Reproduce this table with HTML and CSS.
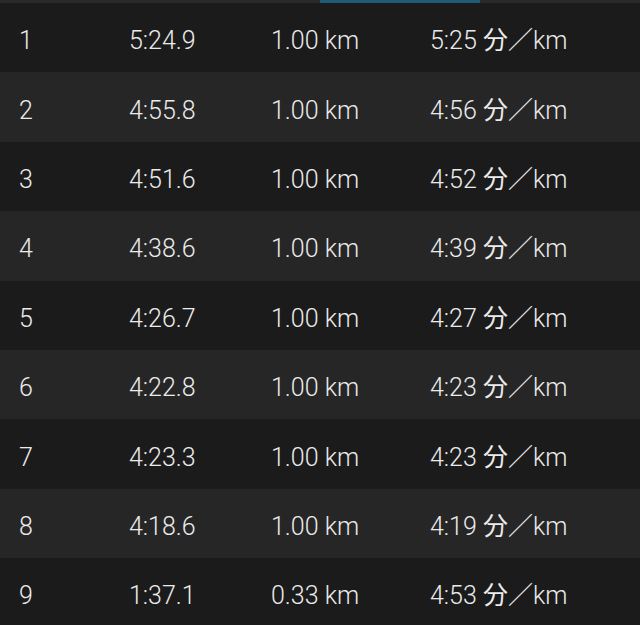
FILE: index.html
```html
<!DOCTYPE html>
<html lang="ja">
<head>
<meta charset="utf-8">
<link rel="stylesheet" href="styles.css">
</head>
<body>
<div class="tabbar"><div class="tab-indicator"></div></div>
<div class="laps">
  <div class="lap"><span>1</span><span>5:24.9</span><span>1.00 km</span><span>5:25 <span class="cjk">分／</span>km</span></div>
  <div class="lap"><span>2</span><span>4:55.8</span><span>1.00 km</span><span>4:56 <span class="cjk">分／</span>km</span></div>
  <div class="lap"><span>3</span><span>4:51.6</span><span>1.00 km</span><span>4:52 <span class="cjk">分／</span>km</span></div>
  <div class="lap"><span>4</span><span>4:38.6</span><span>1.00 km</span><span>4:39 <span class="cjk">分／</span>km</span></div>
  <div class="lap"><span>5</span><span>4:26.7</span><span>1.00 km</span><span>4:27 <span class="cjk">分／</span>km</span></div>
  <div class="lap"><span>6</span><span>4:22.8</span><span>1.00 km</span><span>4:23 <span class="cjk">分／</span>km</span></div>
  <div class="lap"><span>7</span><span>4:23.3</span><span>1.00 km</span><span>4:23 <span class="cjk">分／</span>km</span></div>
  <div class="lap"><span>8</span><span>4:18.6</span><span>1.00 km</span><span>4:19 <span class="cjk">分／</span>km</span></div>
  <div class="lap"><span>9</span><span>1:37.1</span><span>0.33 km</span><span>4:53 <span class="cjk">分／</span>km</span></div>
</div>
</body>
</html>
```
FILE: styles.css
```css
html, body {
  margin: 0;
  padding: 0;
  background: #1b1b1b;
  width: 640px;
  height: 625px;
  overflow: hidden;
}
.tabbar {
  height: 3px;
  background: #2a2a2a;
  display: flex;
  padding-left: 320px;
}
.tab-indicator {
  width: 160px;
  background: #1f5b74;
}
.laps {
  display: flex;
  flex-direction: column;
}
.lap {
  height: 69.4px;
  box-sizing: border-box;
  display: grid;
  grid-template-columns: 110px 142px 159px 1fr;
  align-items: baseline;
  align-content: center;
  padding-left: 19px;
  padding-top: 7px;
  font-family: Roboto, "Noto Sans CJK JP", sans-serif;
  font-weight: 300;
  font-size: 25px;
  line-height: 30px;
  color: #ebebeb;
  background: #1b1b1b;
}
.lap:nth-child(even) {
  background: #262626;
}
.cjk {
  font-family: "Noto Sans CJK JP", sans-serif;
  font-weight: 400;
  line-height: 1;
}
```
